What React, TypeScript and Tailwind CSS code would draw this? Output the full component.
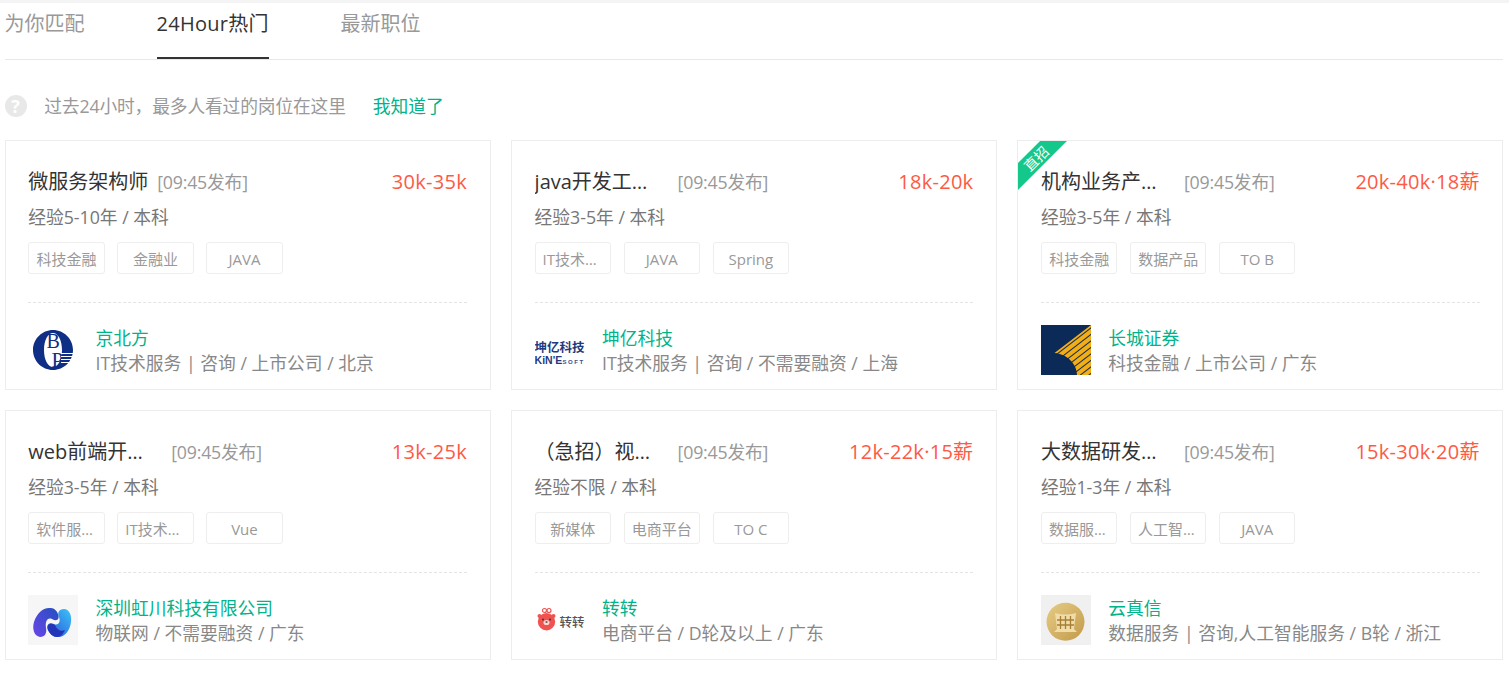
const sans = "font-['Open_Sans','Noto_Sans_CJK_SC',sans-serif]";

type Job = {
  title: string;
  salary: string;
  exp: string;
  tags: string[];
  company: string;
  desc: string;
  logo: React.ReactNode;
  direct?: boolean;
};

function LogoBp() {
  return (
    <svg width="50" height="50" viewBox="0 0 50 50">
      <path fillRule="evenodd" fill="#0f2f86" d="M25 5C36 5 45 14 45 25S36 45 25 45 5 36 5 25 14 5 25 5ZM25 8C20 8 16 15 16 25S20 42 25 42 34 35 34 25 30 8 25 8Z" />
      <text x="18.5" y="23" fontSize="20" fontFamily="Liberation Serif" fill="#0f2f86">B</text>
      <text x="23.5" y="42" fontSize="21" fontFamily="Liberation Serif" fill="#0f2f86">P</text>
      <path stroke="#ffffff" strokeWidth="1" d="M33 28.5H46M33 31.5H46M33 34.5H46M33 37.5H46" />
    </svg>
  );
}

function LogoKine() {
  return (
    <div className="w-[50px] h-[50px] flex flex-col items-center justify-center overflow-hidden font-['Noto_Sans_CJK_SC',sans-serif]">
      <div className="text-[12.5px] leading-[16px] font-bold text-[#1f3a80] whitespace-nowrap mt-[6px]">坤亿科技</div>
      <div className="w-[50px] flex items-baseline justify-between leading-[11px] whitespace-nowrap font-['Liberation_Sans',sans-serif]">
        <span className="text-[10.5px] font-bold text-[#1f3a80]">KiN'E</span>
        <span className="text-[6px] font-bold tracking-[1.5px] text-[#3a4f8c]">SOFT</span>
      </div>
    </div>
  );
}

function LogoGreatWall() {
  const stripes = [0, 6.5, 13, 19.5, 26, 32.5, 39, 45.5, 52];
  return (
    <svg width="50" height="50" viewBox="0 0 50 50">
      <defs>
        <clipPath id="wedge">
          <path d="M13.5 28L50 0V50H36C36 39 26 29 13.5 28Z" />
        </clipPath>
      </defs>
      <rect width="50" height="50" fill="#0c2a58" />
      <g clipPath="url(#wedge)" stroke="#f2ae14" strokeWidth="4.2">
        {stripes.map((s) => (
          <line key={s} x1={0} y1={38 + s} x2={60} y2={-8 + s} />
        ))}
      </g>
    </svg>
  );
}

function LogoHong() {
  return (
    <svg width="50" height="50" viewBox="0 0 50 50">
      <defs>
        <linearGradient id="hongA" x1="0" y1="1" x2="1" y2="0">
          <stop offset="0" stopColor="#6a45e8" />
          <stop offset="1" stopColor="#2450c0" />
        </linearGradient>
        <linearGradient id="hongB" x1="0" y1="1" x2="1" y2="0">
          <stop offset="0" stopColor="#2a50d8" />
          <stop offset="1" stopColor="#3cc4f7" />
        </linearGradient>
      </defs>
      <rect width="50" height="50" fill="#f6f6f6" />
      <path d="M23 13C15 12 9 18 6 27C4 34 6 41 12 42C17 42 19 38 18 33C17 27 19 22 24 24C29 27 32 24 30 19C29 16 26 13 23 13Z" fill="url(#hongA)" />
      <path d="M29 42C36 43 42 36 43 27C44 20 41 14 36 14C31 14 29 18 31 22C33 27 30 31 26 29C21 27 18 30 20 35C22 39 25 42 29 42Z" fill="url(#hongB)" />
      <path d="M20 35C22 39 25 42 29 42C33 42 35 39 37 35C33 37 29 35 27 30C22 27 18 30 20 35Z" fill="#2434b8" />
    </svg>
  );
}

function LogoZhuan() {
  return (
    <div className="w-[50px] h-[50px] relative flex items-center justify-end">
      <svg className="absolute left-0 top-0" width="50" height="50" viewBox="0 0 50 50">
        <circle cx="9.5" cy="15.5" r="2" fill="none" stroke="#f0524f" strokeWidth="1.2" />
        <circle cx="14" cy="15.5" r="2" fill="none" stroke="#f0524f" strokeWidth="1.2" />
        <circle cx="4.5" cy="21" r="2" fill="#f0524f" />
        <circle cx="18.5" cy="21" r="2" fill="#f0524f" />
        <circle cx="11.5" cy="26.7" r="8.7" fill="#f0524f" />
        <ellipse cx="11.5" cy="27.5" rx="3" ry="2.6" fill="#fbd9d4" />
        <circle cx="8" cy="24.5" r="0.9" fill="#333" />
        <circle cx="15" cy="24.5" r="0.9" fill="#333" />
        <ellipse cx="11.5" cy="27" rx="1.2" ry="0.8" fill="#333" />
      </svg>
      <span className="text-[12.5px] leading-none font-medium text-[#555] whitespace-nowrap mt-[4px] font-['Noto_Sans_CJK_SC',sans-serif]">转转</span>
    </div>
  );
}

function LogoYun() {
  return (
    <svg width="50" height="50" viewBox="0 0 50 50">
      <defs>
        <linearGradient id="gold" x1="0" y1="0" x2="1" y2="1">
          <stop offset="0" stopColor="#e6cc85" />
          <stop offset="1" stopColor="#c29a4a" />
        </linearGradient>
      </defs>
      <rect width="50" height="50" fill="#f0f0f0" />
      <circle cx="24.5" cy="26.7" r="19" fill="url(#gold)" />
      <path d="M14 18Q24.5 21 35 18L33 34L36 37H13L16 34Z" fill="#efdca8" />
      <path d="M19.5 21V34M24.5 21V34M29.5 21V34M16 25H33M16 30H33" stroke="#a67f35" strokeWidth="1.3" fill="none" />
    </svg>
  );
}

const jobs: Job[] = [
  { title: "微服务架构师", salary: "30k-35k", exp: "经验5-10年 / 本科", tags: ["科技金融", "金融业", "JAVA"], company: "京北方", desc: "IT技术服务 | 咨询 / 上市公司 / 北京", logo: <LogoBp /> },
  { title: "java开发工程师", salary: "18k-20k", exp: "经验3-5年 / 本科", tags: ["IT技术服务", "JAVA", "Spring"], company: "坤亿科技", desc: "IT技术服务 | 咨询 / 不需要融资 / 上海", logo: <LogoKine /> },
  { title: "机构业务产品经理", salary: "20k-40k·18薪", exp: "经验3-5年 / 本科", tags: ["科技金融", "数据产品", "TO B"], company: "长城证券", desc: "科技金融 / 上市公司 / 广东", logo: <LogoGreatWall />, direct: true },
  { title: "web前端开发工程师", salary: "13k-25k", exp: "经验3-5年 / 本科", tags: ["软件服务|咨询", "IT技术服务", "Vue"], company: "深圳虹川科技有限公司", desc: "物联网 / 不需要融资 / 广东", logo: <LogoHong /> },
  { title: "（急招）视频运营", salary: "12k-22k·15薪", exp: "经验不限 / 本科", tags: ["新媒体", "电商平台", "TO C"], company: "转转", desc: "电商平台 / D轮及以上 / 广东", logo: <LogoZhuan /> },
  { title: "大数据研发工程师", salary: "15k-30k·20薪", exp: "经验1-3年 / 本科", tags: ["数据服务|咨询", "人工智能服务", "JAVA"], company: "云真信", desc: "数据服务 | 咨询,人工智能服务 / B轮 / 浙江", logo: <LogoYun /> },
];

function JobCard({ job }: { job: Job }) {
  const clipped = job.title.length > 6;
  return (
    <div className="relative h-[250px] border border-[#ededed] bg-white px-[22.6px] pt-[26px] overflow-hidden">
      {job.direct && (
        <div className="absolute left-[-32px] top-[8px] w-[100px] h-[19px] -rotate-45 bg-[#14c78a] text-white text-[14px] leading-[19px] text-center">
          直招
        </div>
      )}
      <div className="flex items-center h-[30px]">
        <div className={clipped ? "w-[134px] pr-[9px] shrink-0 truncate text-[20px] leading-[30px] text-[#333]" : "text-[20px] leading-[30px] text-[#333] whitespace-nowrap"}>
          {job.title}
        </div>
        <div className="ml-[9px] text-[17.76px] tracking-[-0.2px] text-[#999] whitespace-nowrap">[09:45发布]</div>
        <div className="ml-auto text-[20px] tracking-[0.28px] text-[#fd5a45] whitespace-nowrap">{job.salary}</div>
      </div>
      <div className="mt-[5px] text-[17.76px] leading-[30px] text-[#777]">{job.exp}</div>
      <div className="mt-[10px] flex gap-[12.5px]">
        {job.tags.map((tag) => (
          <div key={tag} className="w-[76.5px] h-[32px] px-[7px] border border-[#eeeeee] rounded-[3px] text-[15px] leading-[32px] text-[#999] text-center truncate">
            {tag}
          </div>
        ))}
      </div>
      <div className="mt-[28px] border-t border-dashed border-[#e4e4e4]" />
      <div className="mt-[22px] flex items-start gap-[17.4px]">
        <div className="w-[50px] h-[50px] shrink-0">{job.logo}</div>
        <div className="mt-[1px]">
          <div className="text-[17.76px] leading-[25px] text-[#00b38a] whitespace-nowrap">{job.company}</div>
          <div className="text-[17.76px] leading-[25px] text-[#888] whitespace-nowrap">{job.desc}</div>
        </div>
      </div>
    </div>
  );
}

export default function App() {
  const tabs = ["为你匹配", "24Hour热门", "最新职位"];
  return (
    <div className={`${sans} bg-white min-h-[675px]`}>
      <div className="h-[3px] bg-[#f4f4f4]" />
      <div className="ml-[4.6px] mr-[5.6px]">
        <div className="flex gap-[72px] h-[57px] border-b border-[#e8e8e8]">
          {tabs.map((tab, i) => (
            <div
              key={tab}
              className={
                i === 1
                  ? "h-[56px] w-[112px] pt-[6px] text-[20px] tracking-[0.25px] leading-[30px] text-[#333] border-b-2 border-[#333] whitespace-nowrap"
                  : "h-[56px] pt-[6px] text-[20px] leading-[30px] text-[#999] whitespace-nowrap"
              }
            >
              {tab}
            </div>
          ))}
        </div>
        <div className="mt-[35px] h-[22px] flex items-center">
          <div className="w-[22px] h-[22px] rounded-full bg-[#e8e8e8] text-white font-bold text-[18px] leading-[22px] text-center">?</div>
          <span className="ml-[17.6px] text-[17.76px] tracking-[-0.15px] text-[#999] whitespace-nowrap">过去24小时，最多人看过的岗位在这里</span>
          <span className="ml-[27px] text-[17.76px] text-[#00b38a] whitespace-nowrap">我知道了</span>
        </div>
        <div className="mt-[23px] grid grid-cols-[486px_486px_486px] gap-x-[20.4px] gap-y-[20px]">
          {jobs.map((job) => (
            <JobCard key={job.company} job={job} />
          ))}
        </div>
      </div>
    </div>
  );
}
